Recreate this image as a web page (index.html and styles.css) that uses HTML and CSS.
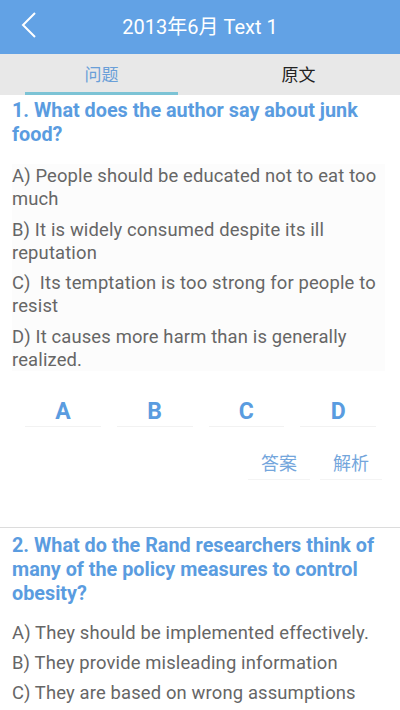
FILE: index.html
```html
<!DOCTYPE html>
<html lang="zh-CN">

<head>
    <meta charset="UTF-8">
    <meta name="viewport" content="width=device-width, initial-scale=1.0">
    <title>2013年6月 Text 1</title>
    <link rel="stylesheet" href="styles.css">
</head>

<body>
    <div class="header">
        <span class="back">
            <svg width="20" height="30" viewBox="0 0 20 30">
                <polyline points="16,2 4,14 16,26" fill="none" stroke="#fff" stroke-width="2" />
            </svg>
        </span>
        <h1>2013年6月 Text 1</h1>
    </div>

    <div class="tabs">
        <div class="tab active">问题</div>
        <div class="tab">原文</div>
    </div>

    <div class="question">
        <h2>1. What does the author say about junk food?</h2>
        <div class="options">
            <p>A) People should be educated not to eat too much</p>
            <p>B) It is widely consumed despite its ill reputation</p>
            <p>C)&nbsp; Its temptation is too strong for people to resist</p>
            <p>D) It causes more harm than is generally realized.</p>
        </div>
        <div class="choices">
            <button>A</button>
            <button>B</button>
            <button>C</button>
            <button>D</button>
        </div>
        <div class="actions">
            <button>答案</button>
            <button>解析</button>
        </div>
    </div>

    <div class="question second">
        <h2>2. What do the Rand researchers think of many of the policy measures to control obesity?</h2>
        <div class="options">
            <p>A) They should be implemented effectively.</p>
            <p>B) They provide misleading information</p>
            <p>C) They are based on wrong assumptions</p>
        </div>
    </div>
</body>

</html>
```

FILE: styles.css
```css
body {
    margin: 0;
    font-family: Roboto, "Noto Sans CJK SC", sans-serif;
    background-color: #fff;
    overflow: hidden;
}

.header {
    height: 54px;
    background-color: #62a2e5;
    display: flex;
    align-items: center;
    justify-content: center;
    position: relative;
}

.header .back {
    position: absolute;
    left: 19px;
    top: 11px;
}

.header h1 {
    margin: 0 0 3px 0;
    color: #fff;
    font-size: 20px;
    font-weight: normal;
}

.tabs {
    height: 41px;
    background-color: #e8e8e8;
    display: flex;
    padding: 0 25px;
    gap: 44px;
}

.tab {
    flex: 1;
    text-align: center;
    font-size: 17px;
    line-height: 43px;
    height: 38px;
    color: #222;
}

.tab.active {
    color: #6a9fd8;
    border-bottom: 3px solid #7cc3d5;
}

.question {
    padding: 4px 12px 0 12px;
}

.question h2 {
    margin: 0;
    font-size: 19.8px;
    line-height: 24px;
    font-weight: bold;
    color: #5a9ce0;
}

.options {
    margin-top: 17px;
    margin-right: 3px;
    background-color: #fcfcfc;
}

.options p {
    margin: 0 0 7px 0;
    font-size: 18.4px;
    letter-spacing: 0.15px;
    line-height: 23.3px;
    color: #666;
}

.choices {
    display: flex;
    gap: 16px;
    padding: 0 12px 0 13px;
    margin-top: 26px;
}

button {
    border: none;
    background: none;
    font-family: inherit;
    cursor: pointer;
    color: #5a9ce0;
}

.choices button {
    flex: 1;
    height: 30px;
    padding: 0;
    font-size: 23px;
    font-weight: bold;
    border-bottom: 1px solid #f2f2f2;
}

.actions {
    display: flex;
    justify-content: flex-end;
    gap: 10px;
    margin-top: 17px;
    padding-right: 6px;
}

.actions button {
    width: 62px;
    height: 36px;
    font-size: 18px;
    color: #74a6dc;
    border-bottom: 1px solid #f4f4f4;
}

.question.second {
    margin-top: 47px;
    border-top: 1px solid #dcdcdc;
    padding-top: 6px;
}

.question.second .options {
    margin-top: 15px;
    background: none;
}

.question.second .options p {
    line-height: 23px;
}
```
